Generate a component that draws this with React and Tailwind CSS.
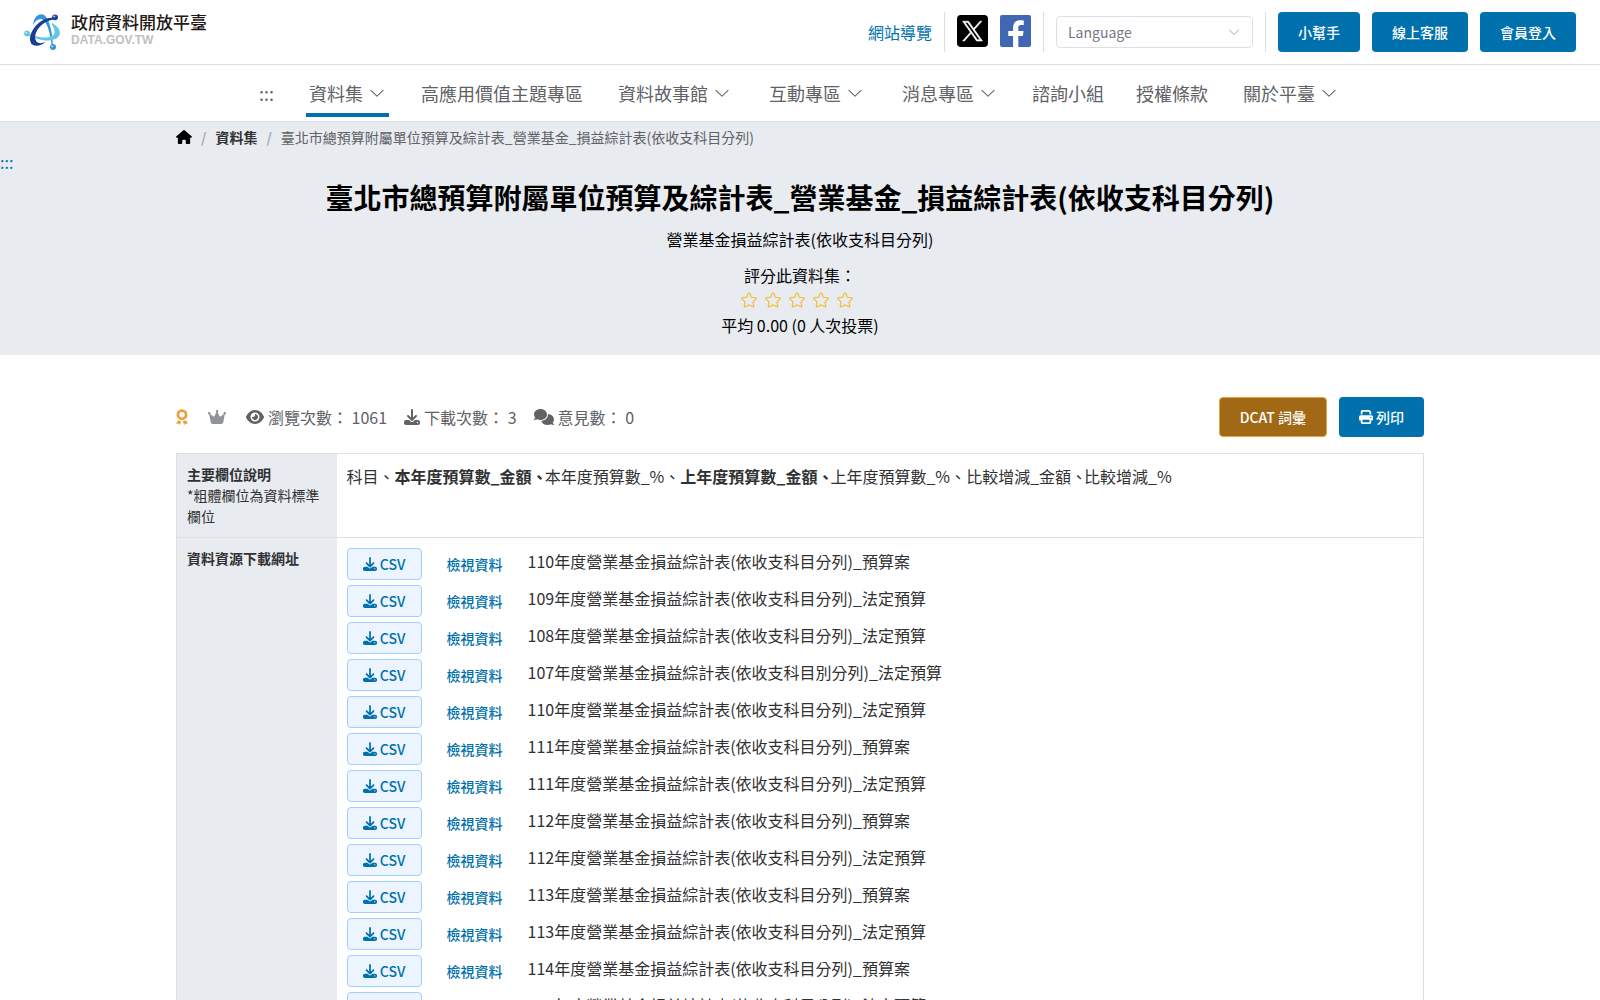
import React, { useState } from 'react'
import { FaComments, FaCrown, FaDownload, FaEye, FaHouse, FaPrint } from 'react-icons/fa6'

const navItems = [
  { label: '資料集', menu: true, active: true },
  { label: '高應用價值主題專區' },
  { label: '資料故事館', menu: true },
  { label: '互動專區', menu: true },
  { label: '消息專區', menu: true },
  { label: '諮詢小組' },
  { label: '授權條款' },
  { label: '關於平臺', menu: true }
]

const fields = [
  { name: '科目' },
  { name: '本年度預算數_金額', standard: true, amount: true },
  { name: '本年度預算數_%' },
  { name: '上年度預算數_金額', standard: true, amount: true },
  { name: '上年度預算數_%' },
  { name: '比較增減_金額', amount: true },
  { name: '比較增減_%' }
]

const resources = [
  '110年度營業基金損益綜計表(依收支科目分列)_預算案',
  '109年度營業基金損益綜計表(依收支科目分列)_法定預算',
  '108年度營業基金損益綜計表(依收支科目分列)_法定預算',
  '107年度營業基金損益綜計表(依收支科目別分列)_法定預算',
  '110年度營業基金損益綜計表(依收支科目分列)_法定預算',
  '111年度營業基金損益綜計表(依收支科目分列)_預算案',
  '111年度營業基金損益綜計表(依收支科目分列)_法定預算',
  '112年度營業基金損益綜計表(依收支科目分列)_預算案',
  '112年度營業基金損益綜計表(依收支科目分列)_法定預算',
  '113年度營業基金損益綜計表(依收支科目分列)_預算案',
  '113年度營業基金損益綜計表(依收支科目分列)_法定預算',
  '114年度營業基金損益綜計表(依收支科目分列)_預算案',
  '114年度營業基金損益綜計表(依收支科目分列)_法定預算'
]

const ArrowDown = ({ className }) => (
  <svg viewBox="0 0 1024 1024" fill="currentColor" className={className} aria-hidden="true">
    <path d="M831.872 340.864 512 652.672 192.128 340.864a30.592 30.592 0 0 0-42.752 0 29.12 29.12 0 0 0 0 41.6L489.664 714.24a32 32 0 0 0 44.672 0l340.288-331.712a29.12 29.12 0 0 0 0-41.728 30.592 30.592 0 0 0-42.752 0z" />
  </svg>
)

const Star = ({ filled }) => (
  <svg viewBox="0 0 1024 1024" fill="currentColor" className="w-[18px] h-[18px]" aria-hidden="true">
    {filled ? (
      <path d="M512 820 313.6 924.48a70.4 70.4 0 0 1-102.144-74.24l37.888-220.928L88.96 472.96A70.4 70.4 0 0 1 128 352.896l221.76-32.256 99.2-200.96a70.4 70.4 0 0 1 126.208 0l99.2 200.96 221.824 32.256a70.4 70.4 0 0 1 39.04 120.064L774.72 629.376l37.888 220.928a70.4 70.4 0 0 1-102.144 74.24z" />
    ) : (
      <path d="m512 747.84 228.16 119.936a6.4 6.4 0 0 0 9.28-6.72l-43.52-254.08 184.512-179.904a6.4 6.4 0 0 0-3.52-10.88l-255.104-37.12L517.76 147.904a6.4 6.4 0 0 0-11.52 0L392.192 379.072l-255.104 37.12a6.4 6.4 0 0 0-3.52 10.88L318.08 606.976l-43.584 254.08a6.4 6.4 0 0 0 9.28 6.72zM313.6 924.48a70.4 70.4 0 0 1-102.144-74.24l37.888-220.928L88.96 472.96A70.4 70.4 0 0 1 128 352.896l221.76-32.256 99.2-200.96a70.4 70.4 0 0 1 126.208 0l99.2 200.96 221.824 32.256a70.4 70.4 0 0 1 39.04 120.064L774.72 629.376l37.888 220.928a70.4 70.4 0 0 1-102.144 74.24L512 820.096l-198.4 104.32z" />
    )}
  </svg>
)

const Medal = () => (
  <svg viewBox="0 0 12 16" fill="#e6a23c" className="w-3 h-4 mr-5" aria-hidden="true">
    <circle cx="6" cy="5.7" r="4.1" fill="none" stroke="#e6a23c" strokeWidth="2.8" />
    <path d="M2 11.200 0 14.800 2.400 14.600 3.700 16 5.300 12.400z" />
    <path d="M10 11.200 12 14.800 9.600 14.600 8.300 16 6.700 12.400z" />
  </svg>
)

const LogoMark = () => (
  <svg viewBox="0 0 40 37" className="w-10 h-[37px]" aria-hidden="true">
    <path d="M9 11C10 3 14 .3 17.500.3 24 .3 28 14 29 31h-1.300C26 17 22 5 17 5c-4 0-6 3-8 6z" fill="#3396d8" />
    <path d="M28 9c7 4 9.500 9 7 13-4 6-17 6.500-32-1.500l.5-1C16 25 27 24.500 30 20.500c1.500-3 0-7-2.500-10.500z" fill="#63c6e8" />
    <path d="M29.500 4C17 2 3.500 18 6.500 28c1.500 5.500 10.500 4.500 15 0-5 2-9 1.500-10-2.500C9.500 17 19 7 29.500 5.500z" fill="#173f96" />
    <circle cx="31" cy="3.300" r="2.900" fill="#173f96" />
    <circle cx="3" cy="19.500" r="2.900" fill="#63c6e8" />
    <circle cx="29" cy="33" r="3" fill="#3396d8" />
    <circle cx="30.300" cy="2.500" r="1" fill="#fff" opacity="0.7" />
    <circle cx="2.200" cy="18.700" r="1" fill="#fff" opacity="0.7" />
    <circle cx="28.200" cy="32.200" r="1" fill="#fff" opacity="0.7" />
  </svg>
)

const XLogo = () => (
  <svg viewBox="0 0 32 32" preserveAspectRatio="none" className="w-[31px] h-8" aria-hidden="true">
    <rect width="32" height="32" rx="4" fill="#000" />
    <g transform="translate(4.900 5.300) scale(0.93 0.9)">
      <path
        d="M14.095 10.317 22.286 1h-1.941l-7.114 8.088L7.551 1H1l8.590 12.231L1 23h1.941l7.510-8.543L16.449 23H23l-8.905-12.683zM3.640 2.430h2.981l13.723 19.210h-2.981z"
        fill="#fff"
        stroke="#fff"
        strokeWidth="0.7"
      />
    </g>
  </svg>
)

const FacebookLogo = () => (
  <svg viewBox="0 0 32 32" preserveAspectRatio="none" className="w-[31px] h-8" aria-hidden="true">
    <rect width="32" height="32" rx="2" fill="#4267b2" />
    <path d="M13.500 32V21H8.500v-5h5v-3.500c0-4.700 2.800-7.300 7-7.300 1.900 0 3.600.15 4 .2v4.700h-2.800c-2.300 0-2.800 1.100-2.800 2.700V16h5.400l-.7 5h-4.700v11z" fill="#fff" />
  </svg>
)

const Divider = () => <div className="w-px h-10 bg-[#dcdfe6]" />

const TopBar = () => (
  <div className="flex items-center justify-between h-[65px] px-6 border-b border-[#dcdfe6]">
    <a href="#" className="flex items-center gap-[7px]">
      <LogoMark />
      <span className="flex flex-col pb-2">
        <span className="text-[17px] leading-6 font-medium text-[#231815]">政府資料開放平臺</span>
        <span className="font-['Liberation_Sans',sans-serif] text-xs leading-3 font-bold text-[#bfbfbf]">DATA.GOV.TW</span>
      </span>
    </a>

    <div className="flex items-center gap-3">
      <a href="#" className="text-base text-[#0071ad]">網站導覽</a>
      <Divider />
      <a href="#" aria-label="X" className="pb-0.5"><XLogo /></a>
      <a href="#" aria-label="Facebook" className="pb-0.5"><FacebookLogo /></a>
      <Divider />
      <div className="relative w-[197px]">
        <select
          aria-label="Language"
          className="w-full h-8 pl-[11px] pr-8 appearance-none rounded border border-[#dcdfe6] bg-white text-sm text-[#767688]"
        >
          <option>Language</option>
        </select>
        <ArrowDown className="absolute right-3 top-2 w-[14px] h-4 text-[#a8abb2] pointer-events-none" />
      </div>
      <Divider />
      <button className="h-10 px-5 rounded bg-[#0071ad] text-sm font-medium text-white">小幫手</button>
      <button className="h-10 px-5 rounded bg-[#0071ad] text-sm font-medium text-white">線上客服</button>
      <button className="h-10 px-5 rounded bg-[#0071ad] text-sm font-medium text-white">會員登入</button>
    </div>
  </div>
)

const NavBar = () => (
  <nav className="flex justify-center gap-8 h-[57px] pb-1 border-b border-[#dcdfe6] text-lg text-[#606266]">
    <a href="#" className="flex items-center pt-1">:::</a>
    {navItems.map((item) =>
      item.menu ? (
        <button
          key={item.label}
          className={`flex items-center gap-[5px] px-[3px] border-b-4 pt-2 ${
            item.active ? 'border-[#0071ad]' : 'border-transparent'
          }`}
        >
          {item.label}
          <ArrowDown className="w-[18px] h-[18px]" />
        </button>
      ) : (
        <a key={item.label} href="#" className="flex items-center pt-1">{item.label}</a>
      )
    )}
  </nav>
)

const Hero = () => {
  const [rating, setRating] = useState(0)

  return (
    <section className="bg-[#e8ebf0] pb-[18px]">
      {/* Breadcrumb */}
      <div className="flex items-center w-full max-w-[1248px] h-[30px] mx-auto text-sm">
        <a href="#" aria-label="首頁" className="text-black"><FaHouse className="w-4 h-[14px]" /></a>
        <span className="mx-[9px] font-bold text-[#a8abb2]">/</span>
        <a href="#" className="font-bold text-[#303133]">資料集</a>
        <span className="mx-[9px] font-bold text-[#a8abb2]">/</span>
        <span className="text-[#606266]">臺北市總預算附屬單位預算及綜計表_營業基金_損益綜計表(依收支科目分列)</span>
      </div>
      <a href="#" className="block text-base leading-5 text-[#0071ad]">:::</a>

      {/* Title */}
      <div className="flex flex-col items-center text-black">
        <h1 className="mt-1 text-[28px] leading-[42px] font-bold">
          臺北市總預算附屬單位預算及綜計表_營業基金_損益綜計表(依收支科目分列)
        </h1>
        <p className="mt-[9px] text-base">營業基金損益綜計表(依收支科目分列)</p>
        <p className="mt-3 text-base">評分此資料集：</p>
        <div className="flex items-center h-[26px] text-[#f7ba2a]">
          {[1, 2, 3, 4, 5].map((n) => (
            <button key={n} aria-label={`${n} 星`} onClick={() => setRating(n)} className="mr-[6px]">
              <Star filled={n <= rating} />
            </button>
          ))}
        </div>
        <p className="text-base">平均 0.00 (0 人次投票)</p>
      </div>
    </section>
  )
}

const App = () => (
  <div className="min-h-screen bg-white font-['Noto_Sans_CJK_TC',sans-serif] text-[#303133]" lang="zh-TW">
    <header>
      <TopBar />
      <NavBar />
    </header>

    <main>
      <Hero />

      <div className="w-full max-w-[1248px] mx-auto pt-[42px]">
        {/* Stats */}
        <div className="flex items-center justify-between mb-4">
          <div className="flex items-center text-base text-[#606266]">
            <Medal />
            <FaCrown className="w-[18px] h-4 mr-5 text-[#909399]" />
            <span className="flex items-center gap-1 mr-[17px]">
              <FaEye className="w-[18px] h-4" />瀏覽次數： 1061
            </span>
            <span className="flex items-center gap-1 mr-[17px]">
              <FaDownload className="w-4 h-4" />下載次數： 3
            </span>
            <span className="flex items-center gap-1">
              <FaComments className="w-5 h-4" />意見數： 0
            </span>
          </div>
          <div className="flex gap-3 text-sm font-medium text-white">
            <button className="h-10 px-5 rounded border border-[#e6a23c] bg-[#a16915]">DCAT 詞彙</button>
            <button className="flex items-center gap-[3px] h-10 px-5 rounded bg-[#0071ad]">
              <FaPrint className="w-[14px] h-[14px]" />列印
            </button>
          </div>
        </div>

        {/* Dataset details */}
        <table className="w-full border border-[#dcdfe6] border-collapse text-left">
          <tbody>
            <tr className="border-b border-[#dcdfe6] align-top">
              <th className="w-40 p-[10px] bg-[#e8ebf0] text-sm leading-[21px] font-normal">
                <span className="font-bold">主要欄位說明</span>
                <br />
                *粗體欄位為資料標準欄位
              </th>
              <td className="p-[10px] text-base">
                {fields.map((field, i) => (
                  <span
                    key={field.name}
                    className={`${field.standard ? 'font-bold' : ''} ${field.amount ? '-mr-[3px]' : ''}`}
                  >
                    {field.name}
                    {i < fields.length - 1 && '、'}
                  </span>
                ))}
              </td>
            </tr>
            <tr className="align-top">
              <th className="w-40 p-[10px] bg-[#e8ebf0] text-sm leading-[21px] font-bold">資料資源下載網址</th>
              <td className="p-[10px]">
                <ul className="flex flex-col gap-[5px]">
                  {resources.map((name) => (
                    <li key={name} className="flex items-start">
                      <button className="flex items-center justify-center gap-[3px] w-[75px] h-8 rounded border border-[#a0cfff] bg-[#ecf5ff] text-sm font-medium text-[#0071ad]">
                        <FaDownload className="w-[14px] h-[14px]" />CSV
                      </button>
                      <a href="#" className="mx-[25px] text-sm leading-8 font-medium text-[#0071ad]">檢視資料</a>
                      <span className="text-base leading-[26px]">{name}</span>
                    </li>
                  ))}
                </ul>
              </td>
            </tr>
          </tbody>
        </table>
      </div>
    </main>
  </div>
)

export default App
